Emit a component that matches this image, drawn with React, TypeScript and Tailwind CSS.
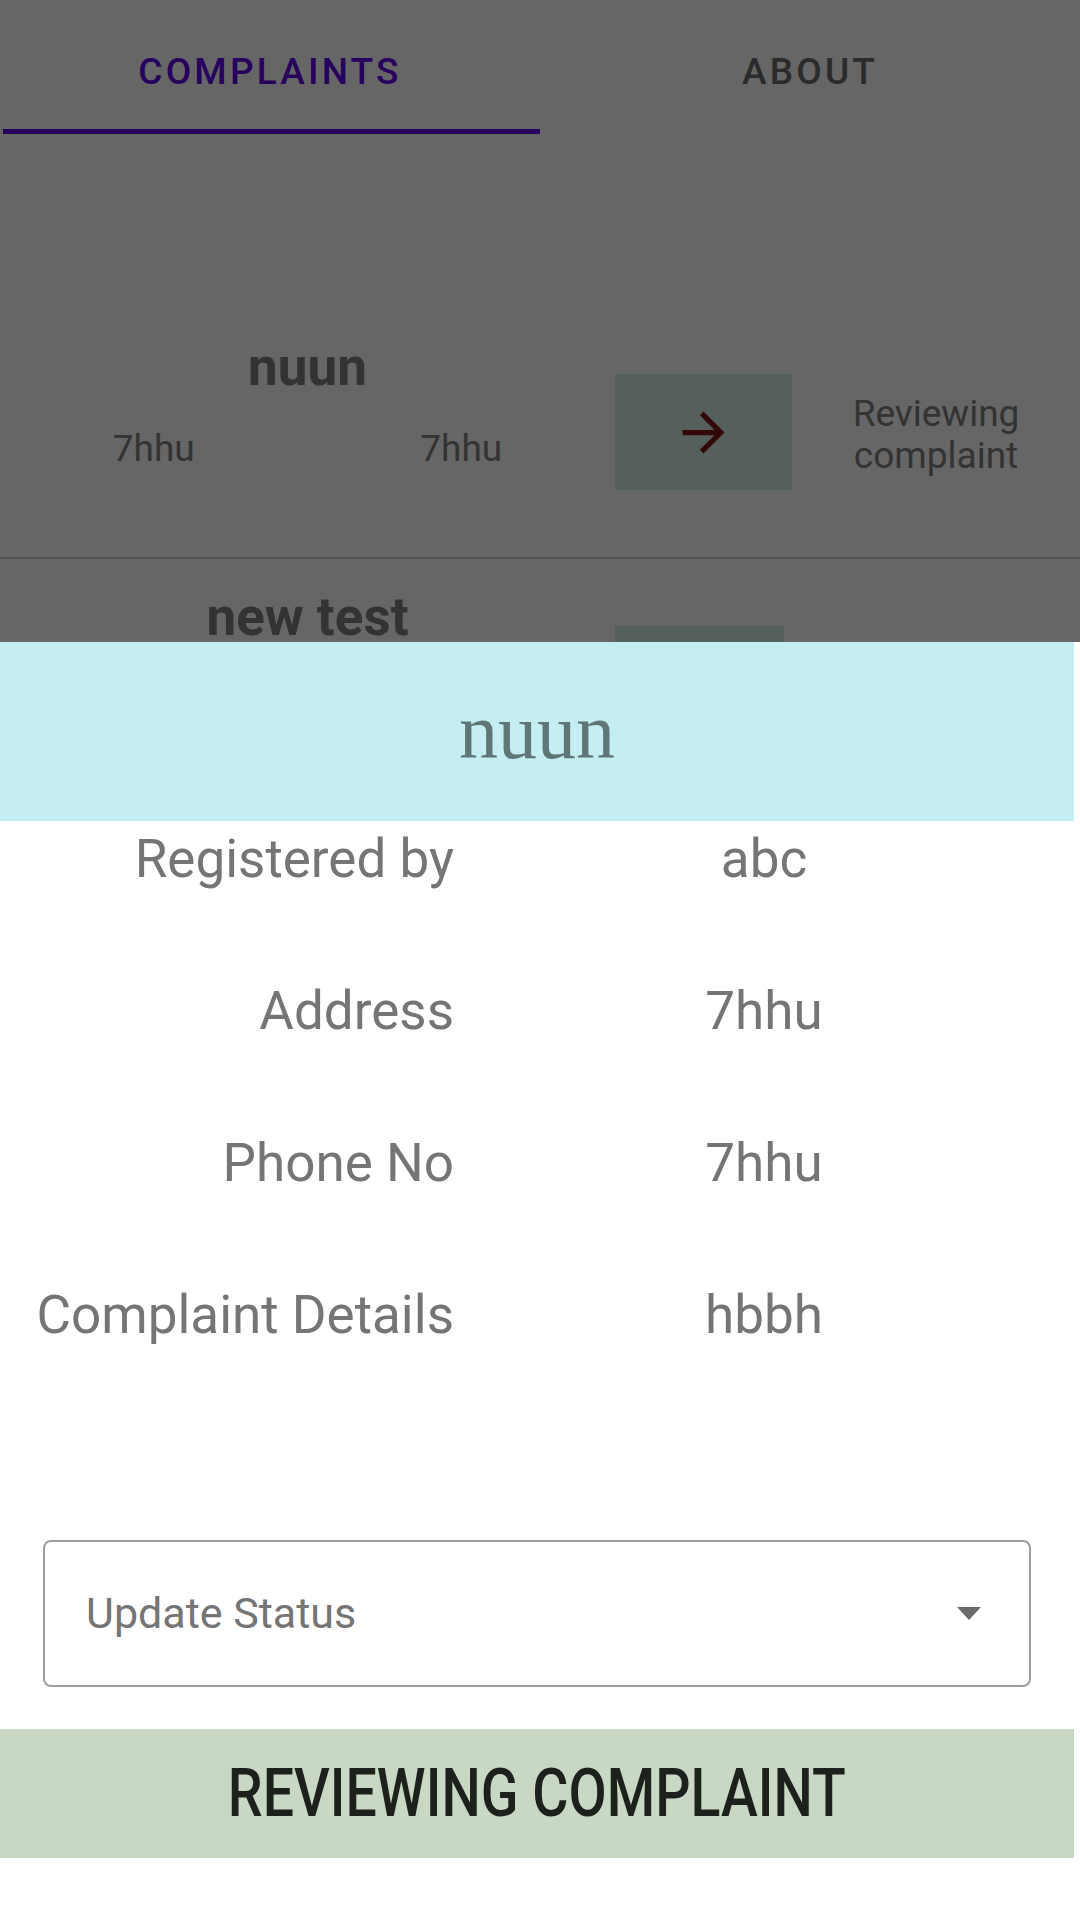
import React from "react";

function ArrowForward() {
  return (
    <svg width="63" height="63" viewBox="0 0 24 24">
      <path d="M12 4l-1.41 1.41L16.17 11H4v2h12.17l-5.58 5.59L12 20l8-8z" fill="#801414" />
    </svg>
  );
}

const rows: [string, string][] = [
  ["Registered by", "abc"],
  ["Address", "7hhu"],
  ["Phone No", "7hhu"],
  ["Complaint Details", "hbbh"],
];

export default function App() {
  return (
    <div className="relative w-[1080px] h-[1920px] overflow-hidden bg-white font-['Roboto',sans-serif]">
      {/* Tabs */}
      <div className="flex h-[134px]">
        <div className="flex-1 flex flex-col">
          <div className="h-[129px] pt-[14px] flex items-center justify-center">
            <span className="text-[37px] leading-none font-medium tracking-[3.2px] text-[#6200ee]">COMPLAINTS</span>
          </div>
          <div className="h-[5px] ml-[3px] bg-[#6200ee]" />
        </div>
        <div className="flex-1 flex flex-col">
          <div className="h-[129px] pt-[14px] flex items-center justify-center">
            <span className="text-[37px] leading-none font-medium tracking-[3.2px] text-[#6b6b6b]">ABOUT</span>
          </div>
        </div>
      </div>

      {/* List row 1 */}
      <div className="flex items-start h-[423px] pt-[203px]">
        <div className="w-[615px] flex flex-col">
          <div className="text-center text-[53px] leading-[61px] font-bold text-[#808080]">nuun</div>
          <div className="flex mt-[29px] text-[37px] leading-[43px] text-[#808080]">
            <div className="flex-1 text-center">7hhu</div>
            <div className="flex-1 text-center">7hhu</div>
          </div>
        </div>
        <div className="mt-[37px] w-[177px] h-[116px] bg-[#d5eee6] flex items-center justify-center">
          <ArrowForward />
        </div>
        <div className="flex-1 mt-[56px] text-center text-[37px] leading-[42px] text-[#808080]">
          Reviewing
          <br />
          complaint
        </div>
      </div>
      <div className="h-[2px] bg-[#d5d5d5]" />

      {/* List row 2 (partly hidden under the sheet) */}
      <div className="flex items-start pt-[28px]">
        <div className="w-[615px] flex flex-col">
          <div className="text-center text-[53px] leading-[61px] font-bold text-[#808080]">new test</div>
          <div className="flex mt-[29px] text-[37px] leading-[43px] text-[#808080]">
            <div className="flex-1 text-center">7hhu</div>
            <div className="flex-1 text-center">7hhu</div>
          </div>
        </div>
        <div className="mt-[39px] w-[169px] h-[116px] bg-[#d5eee6] flex items-center justify-center">
          <ArrowForward />
        </div>
      </div>

      {/* Scrim */}
      <div className="absolute inset-0 bg-black/60" />

      {/* Bottom sheet */}
      <div className="absolute left-0 right-0 top-[642px] bottom-0 bg-white flex flex-col">
        <div className="w-[1074px] h-[179px] bg-[#c5eef2] flex items-center justify-center">
          <span className="font-['Liberation_Serif',serif] text-[78px] text-[#5f7677] leading-none">nuun</span>
        </div>

        <div className="mt-[8px] flex flex-col gap-[91px] text-[53px] leading-[61px] text-[#757575]">
          {rows.map(([label, value]) => (
            <div key={label} className="flex">
              <div className="w-[454px] text-right">{label}</div>
              <div className="w-[620px] text-center">{value}</div>
            </div>
          ))}
        </div>

        <div className="mt-[194px] ml-[43px] w-[988px] h-[147px] border-2 border-[#9e9e9e] rounded-[8px] flex items-center justify-between pl-[41px] pr-[48px]">
          <span className="text-[43px] leading-none text-[#757575]">Update Status</span>
          <svg width="24" height="13" viewBox="0 0 24 13">
            <path d="M0 0h24L12 13z" fill="#6b6b6b" />
          </svg>
        </div>

        <div className="mt-[42px] w-[1074px] h-[129px] bg-[#c8d8c4] flex items-center justify-center">
          <span className="inline-block text-[66px] leading-none font-medium text-[#1c211c] scale-x-[0.84]">REVIEWING COMPLAINT</span>
        </div>
      </div>
    </div>
  );
}
